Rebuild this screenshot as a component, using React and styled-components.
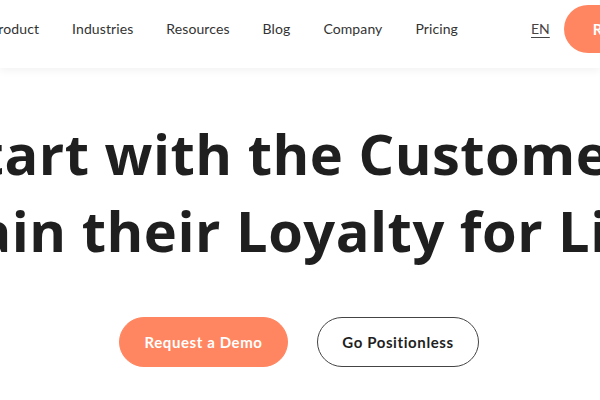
import React from "react";
import styled, { createGlobalStyle } from "styled-components";

const Global = createGlobalStyle`
  html, body { margin: 0; padding: 0; background: #fff; }
  body { font-family: "Lato", "Noto Sans", sans-serif; color: #222; overflow: hidden; }
`;

const Page = styled.div`
  width: 600px;
  height: 400px;
  overflow: hidden;
  background: #fff;
`;

const Header = styled.header`
  height: 68px;
  background: #fff;
  box-shadow: 0 3px 8px rgba(0, 0, 0, 0.05);
  display: flex;
  justify-content: center;
  position: relative;
  z-index: 1;
`;

const HeaderInner = styled.div`
  flex: none;
  width: 1200px;
  display: flex;
  align-items: center;
  padding: 0 0 11px 60px;
  box-sizing: border-box;
`;

const Logo = styled.div`
  flex: none;
  width: 230px;
  font-weight: 800;
  font-size: 22px;
`;

const Nav = styled.nav`
  display: flex;
  gap: 33px;
`;

const NavLink = styled.a`
  font-size: 14px;
  color: #333;
  text-decoration: none;
  letter-spacing: 0.1px;
`;

const Lang = styled.a`
  margin-left: 73px;
  font-size: 14px;
  color: #444;
  text-decoration: underline;
  text-underline-offset: 3px;
`;

const HeaderButton = styled.a`
  margin-left: 14px;
  height: 48px;
  padding: 0 29px;
  border-radius: 24px;
  background: #ff8660;
  color: #fff;
  font-weight: 700;
  font-size: 15px;
  display: flex;
  align-items: center;
  white-space: nowrap;
`;

const Hero = styled.section`
  display: flex;
  flex-direction: column;
  align-items: center;
  padding-top: 47px;
`;

const Title = styled.h1`
  margin: 0;
  white-space: nowrap;
  text-align: center;
  font-family: "Open Sans", sans-serif;
  font-weight: 700;
  font-size: 56px;
  line-height: 77px;
  color: #1f1f1f;
  letter-spacing: 0.5px;
`;

const Actions = styled.div`
  display: flex;
  gap: 29px;
  margin-top: 48px;
  padding-right: 2px;
`;

const Button = styled.a`
  box-sizing: border-box;
  height: 50px;
  width: ${(p) => p.$w}px;
  border-radius: 25px;
  display: flex;
  align-items: center;
  justify-content: center;
  font-weight: 700;
  font-size: 15px;
  letter-spacing: 0.6px;
  background: ${(p) => (p.$primary ? "#ff8660" : "#fff")};
  color: ${(p) => (p.$primary ? "#fff" : "#1f1f1f")};
  border: 1px solid ${(p) => (p.$primary ? "#ff8660" : "#444")};
`;

export default function App() {
  return (
    <Page>
      <Global />
      <Header>
        <HeaderInner>
          <Logo>Positionless</Logo>
          <Nav>
            <NavLink>Product</NavLink>
            <NavLink>Industries</NavLink>
            <NavLink>Resources</NavLink>
            <NavLink>Blog</NavLink>
            <NavLink>Company</NavLink>
            <NavLink>Pricing</NavLink>
          </Nav>
          <Lang>EN</Lang>
          <HeaderButton>Request a Demo</HeaderButton>
        </HeaderInner>
      </Header>
      <Hero>
        <Title>
          Start with the Customer,
          <br />
          Gain their Loyalty for Life
        </Title>
        <Actions>
          <Button $primary $w={169}>Request a Demo</Button>
          <Button $w={162}>Go Positionless</Button>
        </Actions>
      </Hero>
    </Page>
  );
}
